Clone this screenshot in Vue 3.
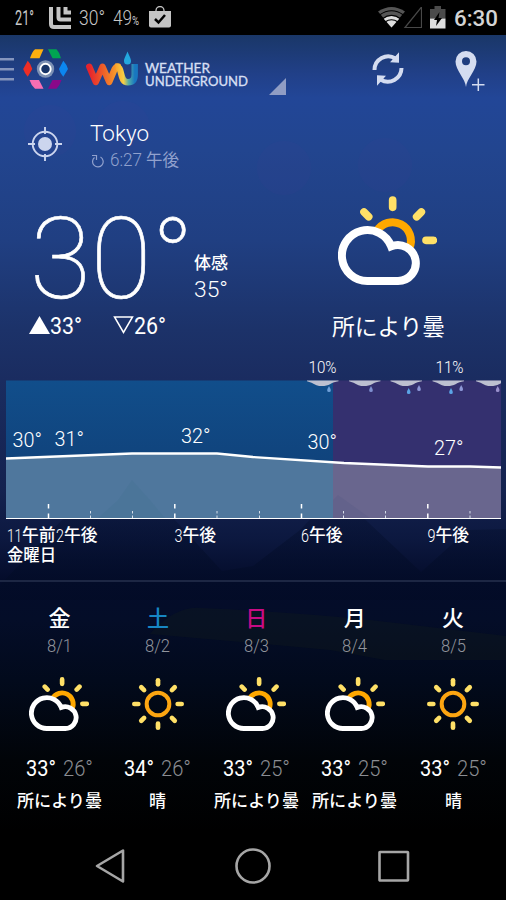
<script setup>
import { h } from 'vue'

// A single line of text set to an exact width, for condensed and widened labels.
const Fit = (p) =>
  h('svg', { class: 'fit', width: p.w, height: p.h, viewBox: `0 0 ${p.w} ${p.h}` }, [
    h('text', { x: 0, y: p.b, 'font-size': p.size, textLength: p.w, lengthAdjust: 'spacingAndGlyphs' }, p.t)
  ])
Fit.props = ['w', 'h', 'b', 'size', 't']

// Weather glyph: a sun, alone or behind a cloud.
const Glyph = (p) => {
  if (p.kind === 'sun') {
    return h('svg', { width: 54, height: 54, viewBox: '-81 -81 162 162', fill: 'none' }, [
      h('circle', { r: 34, stroke: '#fca511', 'stroke-width': 12 }),
      ...[0, 45, 90, 135, 180, 225, 270, 315].map((a) =>
        h('path', { d: 'M0-59V-71', transform: `rotate(${a})`, stroke: '#ffe067', 'stroke-width': 14, 'stroke-linecap': 'round' })
      )
    ])
  }
  return h('svg', { width: p.w, height: (p.w * 267) / 297, viewBox: '255 48 297 267', fill: 'none' }, [
    h('path', { d: 'M371.5 153.5A55 55 0 0 1 469 204', stroke: '#ffa800', 'stroke-width': 24 }),
    h('path', { d: 'M419 60V82M333 96L347 110M505 96L491 110M519 181H541', stroke: '#ffe067', 'stroke-width': 23, 'stroke-linecap': 'round' }),
    h('path', { d: 'M343.5 303A76.5 76.5 0 1 1 414.5 198.8A54 54 0 1 1 435 303Z', stroke: '#fff', 'stroke-width': 24, 'stroke-linejoin': 'miter' })
  ])
}
Glyph.props = ['kind', 'w']

const line = '6,458.5 132,453.5 217,453.5 253,457 344,463 428,466.5 470,466.5 501,467.5'
const temps = [
  { x: 12.5, y: 447, t: '30°' },
  { x: 54.5, y: 445.5, t: '31°' },
  { x: 181, y: 442.5, t: '32°' },
  { x: 307.5, y: 448.5, t: '30°' },
  { x: 434, y: 455, t: '27°' }
]
const hours = [
  { x: 7, n: '11', nw: 15, c: '午前' },
  { x: 56, n: '2', nw: 8, c: '午後' },
  { x: 174.5, n: '3', nw: 8, c: '午後' },
  { x: 301, n: '6', nw: 8, c: '午後' },
  { x: 427.5, n: '9', nw: 8, c: '午後' }
]
const bigTicks = [48.5, 174.8, 301.5, 427.8]
const smallTicks = [90.5, 132.5, 217, 259.5, 343.5, 385.5, 470]
const clouds = [307, 349, 390.5, 432.5, 476]
const drops = [
  [329, 389.5, '#6f9fd8'], [371, 389.5, '#7f90d0'], [408.7, 391.5, '#5ba4e6'], [419, 388.5, '#8e98d8'],
  [451, 391.5, '#5ba4e6'], [461.2, 388.5, '#8e98d8'], [497.7, 389.5, '#9a90cc']
]
const days = [
  { d: '金', c: '#fff', date: '8/1', k: 'cloud', hi: '33°', lo: '26°', t: '所により曇' },
  { d: '土', c: '#1787c4', date: '8/2', k: 'sun', hi: '34°', lo: '26°', t: '晴' },
  { d: '日', c: '#c90b84', date: '8/3', k: 'cloud', hi: '33°', lo: '25°', t: '所により曇' },
  { d: '月', c: '#fff', date: '8/4', k: 'cloud', hi: '33°', lo: '25°', t: '所により曇' },
  { d: '火', c: '#fff', date: '8/5', k: 'sun', hi: '33°', lo: '25°', t: '晴' }
]
</script>

<template>
  <div class="screen">
    <svg class="scenery" width="506" height="900" viewBox="0 0 506 900">
      <defs>
        <linearGradient id="hill" x1="0" y1="0" x2="0" y2="1">
          <stop offset="0" stop-color="#06112f" stop-opacity=".1" />
          <stop offset="1" stop-color="#020b26" stop-opacity=".8" />
        </linearGradient>
      </defs>
      <g fill="#4b3f96" opacity=".09">
        <circle cx="50" cy="131" r="26" /><circle cx="123" cy="128" r="27" />
        <circle cx="284" cy="168" r="27" /><circle cx="385" cy="165" r="27" />
      </g>
      <path d="M0 585L62 520L132 475L175 520L222 571L253 566L300 530L336 492L421 572L468 530L506 529V600H0Z" fill="url(#hill)" />
      <path d="M150 634Q175 606 200 608Q290 612 370 620L506 636V660H385L330 650L253 643Z" fill="#152019" opacity=".28" />
    </svg>

    <header class="status">
      <Fit class="s21" t="21°" :w="19" :h="35" :b="24.7" :size="19.5" />
      <svg class="app" width="22" height="22" viewBox="0 0 22 22" fill="none" stroke="#c4c4c4" stroke-width="4">
        <path d="M2 0V17Q2 20 5 20H22M9.500 0V10.500Q9.500 12.500 11.500 12.500H22" />
        <path d="M16.500 0V5.500H22" />
      </svg>
      <Fit class="s30" t="30°" :w="26" :h="35" :b="24.7" :size="19.5" />
      <Fit class="s49" t="49" :w="19" :h="35" :b="24.7" :size="19.5" />
      <Fit class="pct" t="%" :w="7" :h="35" :b="24.7" :size="12" />
      <svg class="bag" width="22" height="22" viewBox="0 0 22 22">
        <path d="M0 5H22V19.500Q22 21.500 20 21.500H2Q0 21.500 0 19.500Z" fill="#c4c4c4" />
        <path d="M7 6V4.500A4 4 0 0 1 15 4.500V6" fill="none" stroke="#c4c4c4" stroke-width="1.300" />
        <path d="M6 13L9.500 16.500L16 9" fill="none" stroke="#000" stroke-width="2.500" />
      </svg>
      <svg class="radio" width="44" height="22" viewBox="0 0 44 22">
        <path d="M0 4.500Q13.500-4.500 27 4.500L13.500 20.500Z" fill="#555" />
        <path d="M5.500 11.500Q13.500 6 21.500 11.500L13.500 20.500Z" fill="#dedede" />
        <g fill="none" stroke="#000" stroke-width="1.100">
          <path d="M1.500 8Q13.500-.5 25.500 8M4.500 11.700Q13.500 5 22.500 11.700M7 15Q13.500 10.500 20 15" />
        </g>
        <path d="M27 20.500H43.500V0Z" fill="none" stroke="#484848" stroke-width="1.200" />
      </svg>
      <svg class="battery" width="16" height="23" viewBox="0 0 16 23">
        <path d="M0 3H4.500V0H11V3H15.500V12.500H0Z" fill="#4b4b4b" />
        <path d="M0 12.500H15.500V22.500H0Z" fill="#dedede" />
        <path d="M9.500 6L4 14H7L6 20L12 12H8.500Z" fill="#000" />
      </svg>
      <Fit class="clock" t="6:30" :w="44" :h="35" :b="26" :size="22" />
    </header>

    <section class="bar">
      <svg class="brand" width="140" height="70" viewBox="0 0 140 70">
        <defs>
          <linearGradient id="w" x1="0" x2="1">
            <stop offset="0" stop-color="#e5232e" /><stop offset=".5" stop-color="#ee6128" /><stop offset="1" stop-color="#f9a32c" />
          </linearGradient>
          <linearGradient id="u" x1="0" x2="1">
            <stop offset="0" stop-color="#f9a32c" /><stop offset=".42" stop-color="#f7cf45" /><stop offset=".68" stop-color="#54aea6" /><stop offset="1" stop-color="#1877c0" />
          </linearGradient>
        </defs>
        <path d="M0 24.300H14M0 34.200H14M0 44.200H14" stroke="#8595bd" stroke-width="2.600" />
        <path d="M35 14.300H43.500L39.500 23.300H30Q32 17 35 14.300Z" fill="#ffb00f" />
        <path d="M48 14.300H56.500Q60 18 61 23.300H52.500Z" fill="#00a651" />
        <path d="M27.700 25.800Q31 29 32.300 34L27.700 41.700Q24.500 38 23.200 34Z" fill="#ee2d24" />
        <path d="M63.300 25.800Q67 30 68 34L63.300 41.700Q60 38 59 34Z" fill="#0b86f0" />
        <path d="M29.500 45H39L43.500 53.700H35Q31 50 29.500 45Z" fill="#f86eb3" />
        <path d="M52.500 45H61.500Q60 50 56.500 53.700H48Z" fill="#8a0889" />
        <circle cx="45.500" cy="34" r="8.700" fill="#7d91b4" />
        <circle cx="45.500" cy="34" r="5.200" fill="#183467" stroke="#fff" stroke-width="1.900" />
        <g fill="none" stroke-width="6.400" stroke-linejoin="round">
          <path d="M89.300 31.700L95.800 47L102.500 31.700L109.200 47L114.500 34.500Q116 31.500 118 31.500" stroke="url(#w)" stroke-linecap="round" />
          <path d="M115.500 31.700C123.500 30.500 118.500 47.300 128 47.300Q134.700 47.300 134.700 39.500V29" stroke="url(#u)" />
        </g>
        <path d="M127.500 16.500C129.500 21.500 131 23.500 131 26A3.500 3.500 0 0 1 124 26C124 23.500 125.500 21.500 127.500 16.500Z" fill="#23a8df" />
      </svg>
      <div class="wordmark">
        <Fit t="WEATHER" :w="65" :h="13" :b="11" :size="13.5" />
        <Fit t="UNDERGROUND" :w="103" :h="13" :b="11" :size="13.5" />
      </div>
      <svg class="corner" width="17" height="17" viewBox="0 0 17 17"><path d="M17 0V17H0Z" fill="#909dc4" /></svg>
      <svg class="refresh" width="32" height="36" viewBox="0 0 32 36" fill="none" stroke="#d4dcf0" stroke-width="4">
        <path d="M2.500 19A13.700 13.700 0 0 1 23.500 7.500M29.500 17A13.700 13.700 0 0 1 8.500 28.500" />
        <path d="M27 1.300V11.800L18 11.300ZM5 34.700V24.200L14 24.700Z" fill="#d4dcf0" stroke="none" />
      </svg>
      <svg class="pin" width="30" height="42" viewBox="0 0 30 42">
        <path fill-rule="evenodd" d="M11 37C10.500 29 .5 20 .5 11.500A10.500 10.500 0 0 1 21.500 11.500C21.500 20 11.500 29 11 37ZM11 15.300A4 4 0 1 0 11 7.300A4 4 0 1 0 11 15.300Z" fill="#d4dcf0" />
        <path d="M17 34.700H29.500M23.300 28.500V41" stroke="#d4dcf0" stroke-width="1.500" />
      </svg>
    </section>

    <section class="place">
      <svg width="34" height="34" viewBox="-17 -17 34 34" fill="none" stroke="#ccd5ee" stroke-width="1.900">
        <circle r="12.300" /><circle r="7" fill="#ccd5ee" stroke="none" />
        <path d="M0-17V-10M0 10V17M-17 0H-10M10 0H17" />
      </svg>
      <div class="where">
        <Fit class="city" t="Tokyo" :w="59" :h="27" :b="20.5" :size="22" />
        <div class="updated">
          <svg width="13" height="15" viewBox="0 0 13 15" fill="none" stroke="#91a1cd" stroke-width="1.200">
            <path d="M3.500 4.500A5.300 5.300 0 1 0 9.500 4M1 2.500H5.500V7" />
          </svg>
          <Fit t="6:27" :w="32" :h="20" :b="15.500" :size="18" />
          <Fit class="cjk" t="午後" :w="33" :h="20" :b="15.500" :size="16.500" />
        </div>
      </div>
    </section>

    <section class="now">
      <div class="temps">
        <div class="main">
          <Fit class="huge" t="30°" :w="164" :h="105" :b="99" :size="114" />
          <div class="feels">
            <Fit class="cjk" t="体感" :w="34" :h="24" :b="18.5" :size="17" />
            <Fit t="35°" :w="34" :h="28" :b="23" :size="22" />
          </div>
        </div>
        <div class="range">
          <svg width="21" height="18" viewBox="0 0 21 18"><path d="M10.500 0L21 18H0Z" fill="#fff" /></svg>
          <Fit t="33°" :w="32" :h="24" :b="20.500" :size="23" />
          <svg class="low" width="21" height="18" viewBox="0 0 21 18"><path d="M1.500 1H19.500L10.500 16.500Z" fill="none" stroke="#fff" stroke-width="1.500" /></svg>
          <Fit t="26°" :w="32" :h="24" :b="20.500" :size="23" />
        </div>
      </div>
      <div class="sky">
        <Glyph kind="cloud" :w="99" />
        <Fit class="cjk" t="所により曇" :w="113" :h="30" :b="24" :size="22.500" />
      </div>
    </section>

    <svg class="chart" width="506" height="227" viewBox="0 353 506 227">
      <defs>
        <linearGradient id="day" x1="0" y1="0" x2="0" y2="1"><stop offset="0" stop-color="#114e8b" /><stop offset=".6" stop-color="#10437c" /></linearGradient>
        <clipPath id="plot"><rect x="6" y="380.500" width="495" height="138" /></clipPath>
      </defs>
      <rect x="6" y="380.500" width="327" height="138" fill="url(#day)" />
      <rect x="333" y="380.500" width="168" height="138" fill="#34306f" />
      <path d="M6 458.500L132 453.500H217L253 457L333 462.300V518H6Z" fill="#4f779d" />
      <path d="M333 462.300L344 463L428 466.500H470L501 467.500V518H333Z" fill="#69668e" />
      <path d="M132 480L150 500L165 518H98L118 500Z" fill="#3f7090" opacity=".25" />
      <path d="M338 495L370 518H333V500Z" fill="#575883" opacity=".3" />
      <g clip-path="url(#plot)" fill="#bdc0d0">
        <path v-for="x in clouds" :key="x" :transform="`translate(${x} 380)`" d="M0 0H31.500V1.300C28 2 26 2.600 23 4.200C20 6 14 6.800 9.500 5.200C6 3.500 3 2 0 1.300Z" />
      </g>
      <path v-for="d in drops" :key="d[0]" :d="`M${d[0]} ${d[1] - 3.500}Q${d[0] + 3.600} ${d[1] + 2.500} ${d[0]} ${d[1] + 2.500}Q${d[0] - 3.600} ${d[1] + 2.500} ${d[0]} ${d[1] - 3.500}`" :fill="d[2]" />
      <polyline :points="line" fill="none" stroke="#fff" stroke-width="2.300" />
      <path d="M6 518.500H501" stroke="#fff" stroke-width="1.200" />
      <path v-for="x in bigTicks" :key="x" :d="`M${x} 504V508.500M${x} 513.500V518`" stroke="#fff" stroke-width="1.500" />
      <path v-for="x in smallTicks" :key="x" :d="`M${x} 511V513.500M${x} 515.500V518`" stroke="#d5dde8" stroke-width="1" />
      <g class="light" fill="#fff">
        <text x="308.500" y="373" font-size="17" textLength="28" lengthAdjust="spacingAndGlyphs">10%</text>
        <text x="435.500" y="373" font-size="17" textLength="28" lengthAdjust="spacingAndGlyphs">11%</text>
        <text v-for="p in temps" :key="p.x" :x="p.x" :y="p.y" font-size="20" textLength="29.500" lengthAdjust="spacingAndGlyphs">{{ p.t }}</text>
        <g v-for="p in hours" :key="p.x">
          <text :x="p.x" y="541.700" font-size="18" :textLength="p.nw" lengthAdjust="spacingAndGlyphs">{{ p.n }}</text>
          <text class="jp" :x="p.x + p.nw" y="541" font-size="17" textLength="33.500" lengthAdjust="spacingAndGlyphs">{{ p.c }}</text>
        </g>
        <text class="jp" x="7" y="560.500" font-size="17" textLength="49" lengthAdjust="spacingAndGlyphs">金曜日</text>
      </g>
    </svg>

    <section class="week">
      <article v-for="d in days" :key="d.date">
        <div class="name" :style="{ color: d.c }">{{ d.d }}</div>
        <Fit class="date" :t="d.date" :w="25" :h="22" :b="16.500" :size="18" />
        <div class="pic"><Glyph :kind="d.k" :w="60" /></div>
        <div class="pair">
          <Fit class="hi" :t="d.hi" :w="30" :h="24" :b="19" :size="22" />
          <Fit class="lo" :t="d.lo" :w="30" :h="24" :b="19" :size="22" />
        </div>
        <Fit class="cjk" :t="d.t" :w="d.k === 'sun' ? 17 : 85" :h="24" :b="19" :size="17" />
      </article>
    </section>

    <nav class="keys">
      <svg width="30" height="36" viewBox="0 0 30 36"><path d="M2 18L28 2.500V33.500Z" /></svg>
      <svg width="36" height="36" viewBox="0 0 36 36"><circle cx="18" cy="18" r="16.500" /></svg>
      <svg width="32" height="36" viewBox="0 0 32 36"><rect x="1.500" y="4" width="28.500" height="28.500" rx=".5" /></svg>
    </nav>
  </div>
</template>

<style>
body { background: #000; }
.fit { display: block; overflow: visible; flex: none; fill: currentColor; }
</style>

<style scoped>
.screen {
  position: relative;
  width: 506px;
  height: 900px;
  overflow: hidden;
  display: flex;
  flex-direction: column;
  color: #fff;
  font-family: Roboto, "Noto Sans CJK JP", sans-serif;
  font-weight: 300;
  background: linear-gradient(#1a3768 35px, #214089 75px, #224697 98px, #22458f 150px, #203f82 240px, #1c3269 330px, #1a2c60 380px, #14224f 490px, #0c183f 540px, #040c2b 580px, #040d28 620px, #020a1c 680px, #010408 760px, #000 835px);
}
.scenery { position: absolute; left: 0; top: 0; }
.screen > *:not(.scenery) { position: relative; flex: none; }
svg { display: block; flex: none; }
.cjk, .jp { font-family: "Noto Sans CJK JP", sans-serif; font-weight: 500; }

.status { height: 35px; background: #000; display: flex; color: #c8c8c8; padding-left: 15px; }
.s21 { font-weight: 400; margin-right: 15px; }
.app { margin: 7px 8px 0 0; }
.s30 { margin-right: 8px; }
.pct { font-weight: 400; }
.bag { margin: 5.500px 0 0 10px; }
.radio { margin: 7px 0 0 207px; }
.battery { margin: 5.500px 0 0 8px; }
.clock { font-weight: 500; margin-left: 8px; color: #d4d4d4; }

.bar { height: 70px; display: flex; }
.wordmark { font-family: Lato, sans-serif; font-weight: 400; color: #d6dff3; stroke: #d6dff3; stroke-width: .35px; padding: 27px 0 0 5px; width: 125px; box-sizing: border-box; }
.corner { margin: 42.500px 0 0 4px; }
.refresh { margin: 16px 0 0 86px; }
.pin { margin: 15px 0 0 51px; }

.place { height: 80px; display: flex; padding: 0 0 0 28px; }
.place > svg { margin-top: 21.500px; }
.where { padding: 15px 0 0 28px; }
.updated { display: flex; align-items: center; color: #91a1cd; height: 20px; padding-left: 1px; margin-top: 3px; }
.updated > :nth-child(2) { margin: 0 4px 0 6px; }
.updated .cjk { font-weight: 400; }

.now { height: 168px; display: flex; }
.temps { width: 320px; padding: 14px 0 0 26px; box-sizing: border-box; }
.main { display: flex; }
.huge { font-weight: 100; stroke: #fff; stroke-width: .7px; margin-left: 4px; }
.feels { padding: 51px 0 0; }
.range { display: flex; align-items: center; margin: 9px 0 0 3px; font-weight: 400; }
.range .low { margin-left: 31px; }
.sky { padding: 11px 0 0 12px; }
.sky > :first-child { margin-left: 6px; }
.sky .cjk { margin-top: 26px; font-weight: 400; }

.light { font-weight: 300; }
.week { height: 250px; box-sizing: border-box; border-top: 2px solid #1d2744; display: grid; grid-template-columns: repeat(5, 98.400px); padding: 20px 0 0 10.300px; }
.week article { display: flex; flex-direction: column; align-items: center; }
.name { font: 500 22px/28px "Noto Sans CJK JP", sans-serif; }
.date { color: #92959d; margin-top: 5px; }
.pic { height: 54px; margin-top: 20px; }
.pair { display: flex; gap: 7px; margin-top: 26px; }
.hi { font-weight: 400; }
.lo { color: #8b8d92; }
.pair + .cjk { margin-top: 7px; }

.keys { height: 70px; background: #000; display: flex; align-items: center; padding: 2px 0 0 95px; box-sizing: border-box; gap: 110px; }
.keys svg { fill: none; stroke: #a6a6a6; stroke-width: 2.600; stroke-linejoin: round; }
.keys svg:nth-child(3) { margin-left: -3px; }
</style>
